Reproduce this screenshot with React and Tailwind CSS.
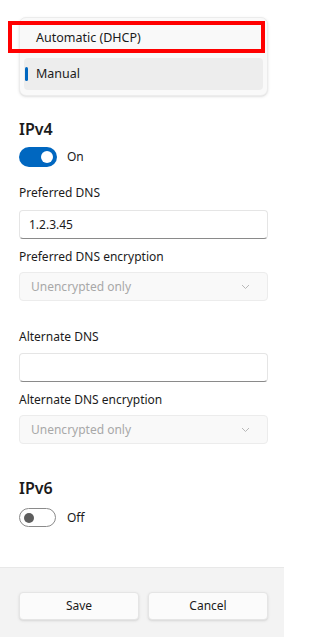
import React from 'react';

function Toggle({ on }) {
  return on ? (
    <div className="w-[38px] h-[20px] rounded-full bg-[#0067c0] flex items-center justify-end pr-[4px]">
      <div className="w-[12px] h-[12px] rounded-full bg-white" />
    </div>
  ) : (
    <div className="w-[37px] h-[19px] rounded-full border border-[#8a8a8a] bg-white flex items-center pl-[4px]">
      <div className="w-[10px] h-[10px] rounded-full bg-[#5d5d5d]" />
    </div>
  );
}

function TextBox({ value }) {
  return (
    <div className="h-[29px] rounded-[4px] bg-white border border-[#e5e5e5] border-b-[#8a8a8a] flex items-center px-[9px] text-[12px] text-[#1b1b1b]">
      {value}
    </div>
  );
}

function DisabledCombo() {
  return (
    <div className="h-[29px] rounded-[4px] bg-[#f9f9f9] border border-[#ececec] flex items-center justify-between pl-[11px] pr-[17px] text-[12px] text-[#a8a8a8]">
      <span>Unencrypted only</span>
      <svg width="9" height="6" viewBox="0 0 9 6" fill="none">
        <path d="M1 1l3.5 3.5L8 1" stroke="#b8b8b8" strokeWidth="1" />
      </svg>
    </div>
  );
}

export default function App() {
  return (
    <div className="w-[284px] h-[637px] bg-white flex flex-col text-[#1b1b1b] leading-[18px]" style={{ fontFamily: '"Noto Sans", "Open Sans", sans-serif' }}>
      <div className="flex-1 px-[19px] pr-[16px]">
        {/* dropdown list */}
        <div className="mt-[17px] relative rounded-[7px] border border-[#ececec] bg-[#f9f9f9] pt-[4px] pb-[5px] px-[4px] flex flex-col gap-[4px] shadow-sm">
          <div className="h-[32px] flex items-center pl-[12px] text-[12.5px]">Automatic (DHCP)</div>
          <div className="h-[32px] rounded-[4px] bg-[#ededed] flex items-center relative pl-[12px] text-[12.5px]">
            <div className="absolute left-[1px] top-[9px] w-[3px] h-[14px] rounded-full bg-[#0067c0]" />
            Manual
          </div>
          <div className="absolute left-[-12px] top-[3px] w-[257px] h-[32px] border-[4px] border-[#ff0000]" />
        </div>

        <div className="mt-[21px] text-[16px] font-semibold leading-[24px]">IPv4</div>
        <div className="mt-[6px] flex items-center gap-[10px] text-[12px]">
          <Toggle on />
          <span>On</span>
        </div>

        <div className="mt-[17px] text-[12px]">Preferred DNS</div>
        <div className="mt-[8px]"><TextBox value="1.2.3.45" /></div>
        <div className="mt-[9px] text-[12px]">Preferred DNS encryption</div>
        <div className="mt-[6px]"><DisabledCombo /></div>

        <div className="mt-[27px] text-[12px]">Alternate DNS</div>
        <div className="mt-[7px]"><TextBox value="" /></div>
        <div className="mt-[9px] text-[12px]">Alternate DNS encryption</div>
        <div className="mt-[6px]"><DisabledCombo /></div>

        <div className="mt-[32px] text-[16px] font-semibold leading-[24px]">IPv6</div>
        <div className="mt-[8px] flex items-center gap-[11px] text-[12px]">
          <Toggle on={false} />
          <span>Off</span>
        </div>
      </div>

      <div className="h-[70px] bg-[#f3f3f3] border-t border-[#e8e8e8] flex items-start gap-[9px] px-[19px] pr-[16px] pt-[24px]">
        <button className="flex-1 h-[28px] rounded-[4px] bg-[#fbfbfb] border border-[#e5e5e5] shadow-sm text-[12px]">Save</button>
        <button className="flex-1 h-[28px] rounded-[4px] bg-[#fbfbfb] border border-[#e5e5e5] shadow-sm text-[12px]">Cancel</button>
      </div>
    </div>
  );
}
